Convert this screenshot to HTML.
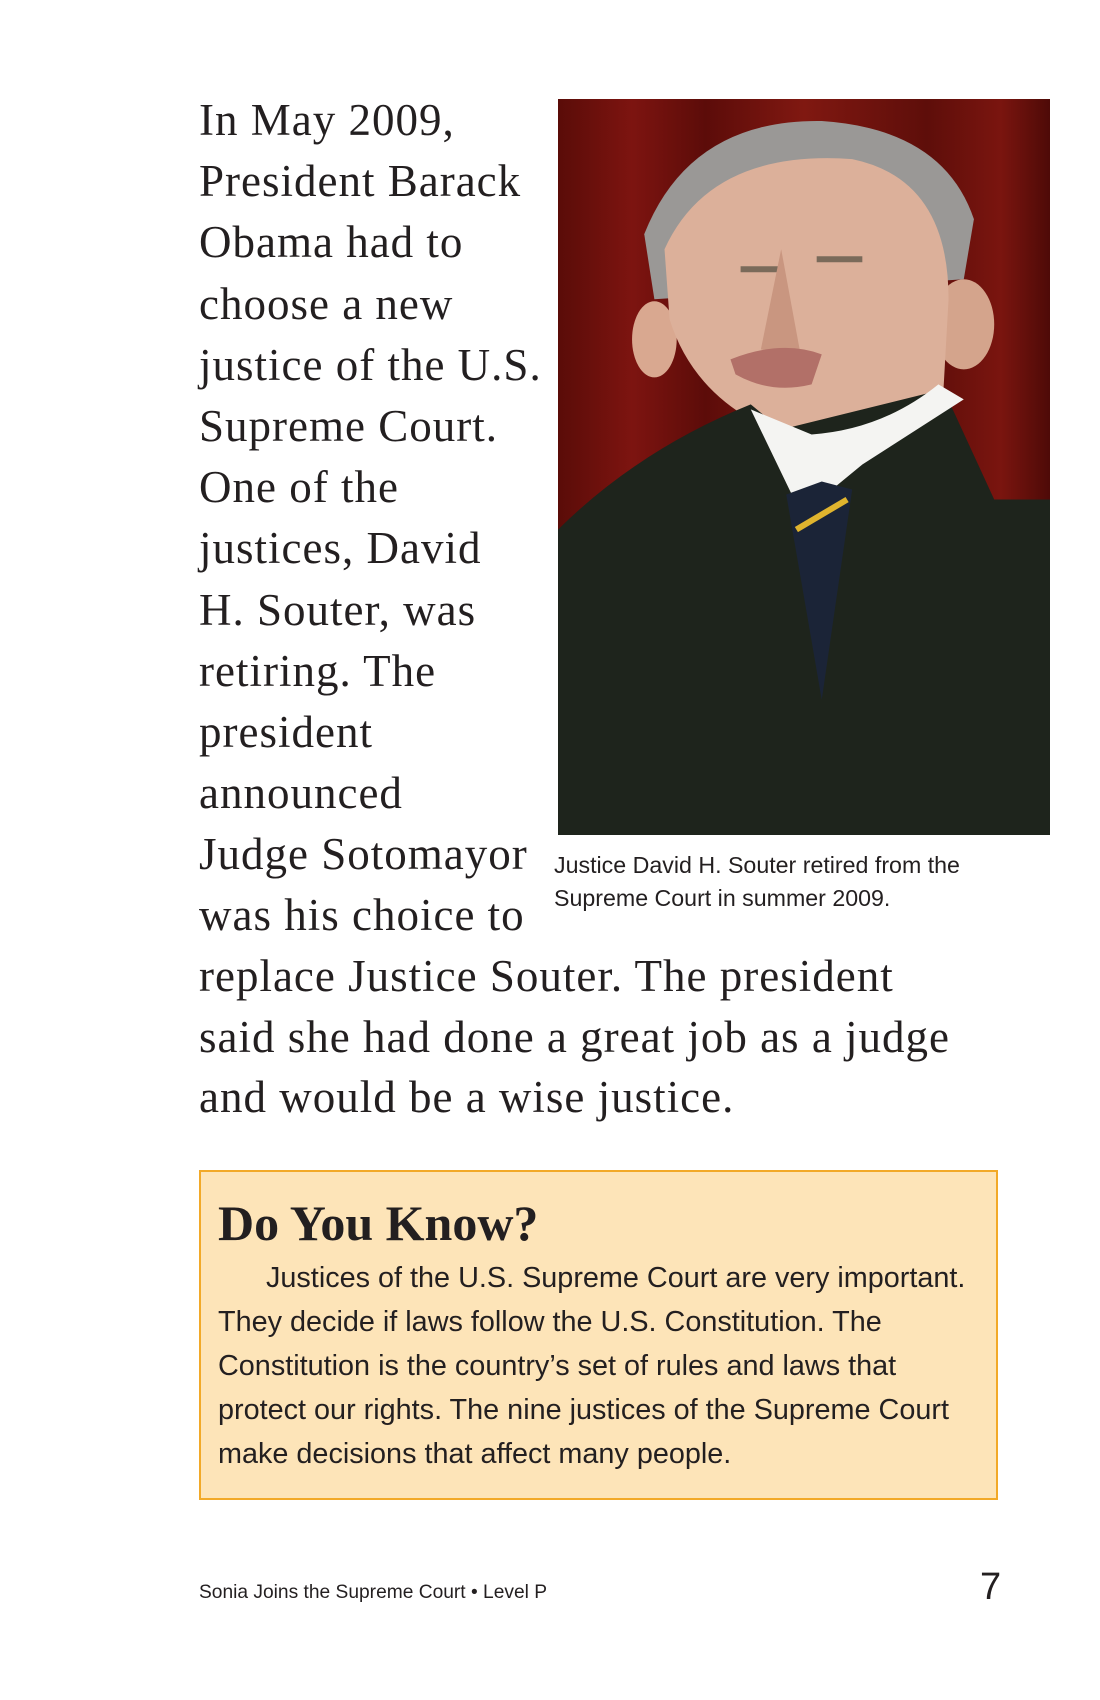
<!DOCTYPE html>
<html><head><meta charset="utf-8"><style>
html,body{margin:0;padding:0;background:#fff;}
body{width:1100px;height:1700px;position:relative;overflow:hidden;}
.s{position:absolute;left:199px;font-family:"Liberation Serif",serif;font-size:45px;color:#231f20;white-space:nowrap;letter-spacing:1px;}
.cap{position:absolute;left:554px;font-family:"Liberation Sans Narrow","Liberation Sans",sans-serif;font-size:23.2px;color:#231f20;white-space:nowrap;}
.box{position:absolute;left:199px;top:1170px;width:795px;height:326px;background:#fde4b8;border:2.5px solid #f2a928;}
.b{position:absolute;left:218px;font-family:"Liberation Sans Narrow","Liberation Sans",sans-serif;font-size:28.8px;color:#231f20;white-space:nowrap;}
</style></head><body>
<div class="s" style="top:94px">In May 2009,</div>
<div class="s" style="top:155px">President Barack</div>
<div class="s" style="top:216px">Obama had to</div>
<div class="s" style="top:278px">choose a new</div>
<div class="s" style="top:339px">justice of the U.S.</div>
<div class="s" style="top:400px">Supreme Court.</div>
<div class="s" style="top:461px">One of the</div>
<div class="s" style="top:522px">justices, David</div>
<div class="s" style="top:584px">H. Souter, was</div>
<div class="s" style="top:645px">retiring. The</div>
<div class="s" style="top:706px">president</div>
<div class="s" style="top:767px">announced</div>
<div class="s" style="top:828px">Judge Sotomayor</div>
<div class="s" style="top:889px">was his choice to</div>
<div class="s" style="top:950px">replace Justice Souter. The president</div>
<div class="s" style="top:1011px">said she had done a great job as a judge</div>
<div class="s" style="top:1071px">and would be a wise justice.</div>

<svg style="position:absolute;left:558px;top:99px" width="492" height="736" viewBox="0 0 485 735" preserveAspectRatio="none">
<defs><linearGradient id="cur" x1="0" x2="1"><stop offset="0" stop-color="#5a0c08"/><stop offset="0.15" stop-color="#7d1410"/><stop offset="0.3" stop-color="#5c0c09"/><stop offset="0.5" stop-color="#801811"/><stop offset="0.75" stop-color="#5e0e0a"/><stop offset="0.9" stop-color="#7a150f"/><stop offset="1" stop-color="#4e0a07"/></linearGradient></defs>
<rect width="485" height="735" fill="url(#cur)"/>
<path d="M85 135 Q130 20 260 22 Q380 30 410 120 L400 180 L95 200 Z" fill="#9a9896"/>
<ellipse cx="95" cy="240" rx="22" ry="38" fill="#d9a890"/>
<ellipse cx="400" cy="225" rx="30" ry="45" fill="#d4a48c"/>
<path d="M105 150 Q150 50 290 60 Q385 80 385 200 L380 290 Q350 320 300 330 Q230 345 190 320 Q130 285 110 220 Z" fill="#dcb09a"/>
<path d="M180 170 L220 170 M255 160 L300 160" stroke="#7a6a5a" stroke-width="6"/>
<path d="M220 150 L200 250 L240 260 Z" fill="#c99680"/>
<path d="M170 260 Q220 240 260 255 L250 285 Q210 295 175 275Z" fill="#b27068"/>
<path d="M0 430 Q80 350 190 305 L220 330 L380 290 L430 400 L485 400 L485 735 L0 735 Z" fill="#1e241c"/>
<path d="M190 310 L240 415 L300 365 L400 300 L375 285 Q320 330 250 335 Z" fill="#f4f4f2"/>
<path d="M225 395 L260 382 L290 390 L260 600 Z" fill="#1b2437"/>
<path d="M235 430 L285 400" stroke="#e0b42e" stroke-width="6"/>
</svg>
<div class="cap" style="top:852px">Justice David H. Souter retired from the</div>
<div class="cap" style="top:885px">Supreme Court in summer 2009.</div>

<div class="box"></div>
<div style="position:absolute;left:218px;top:1194px;font-family:'Liberation Serif',serif;font-weight:bold;font-size:50px;color:#231f20;white-space:nowrap;">Do You Know?</div>
<div class="b" style="top:1262px;left:266px">Justices of the U.S. Supreme Court are very important.</div>
<div class="b" style="top:1306px">They decide if laws follow the U.S. Constitution. The</div>
<div class="b" style="top:1350px">Constitution is the country’s set of rules and laws that</div>
<div class="b" style="top:1394px">protect our rights. The nine justices of the Supreme Court</div>
<div class="b" style="top:1438px">make decisions that affect many people.</div>

<div style="position:absolute;left:199px;top:1582px;font-family:'Liberation Sans Narrow','Liberation Sans',sans-serif;font-size:19.2px;color:#231f20;white-space:nowrap;">Sonia Joins the Supreme Court • Level P</div>
<div style="position:absolute;left:980px;top:1566px;font-family:'Liberation Sans Narrow','Liberation Sans',sans-serif;font-size:38px;color:#231f20;">7</div>
</body></html>
